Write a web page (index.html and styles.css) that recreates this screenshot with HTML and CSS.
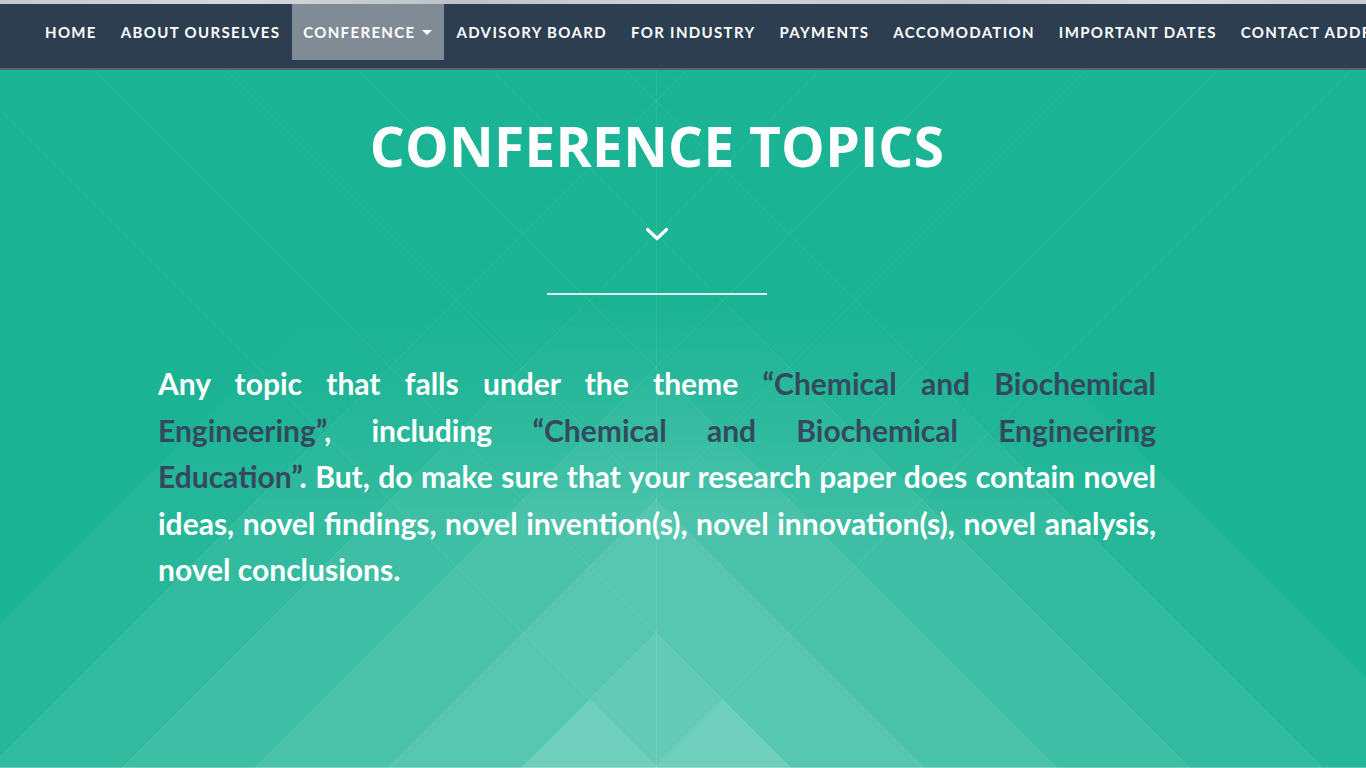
FILE: index.html
```html
<!DOCTYPE html>
<html lang="en">
<head>
<meta charset="utf-8">
<title>Conference Topics</title>
<link rel="stylesheet" href="styles.css">
</head>
<body>
<div class="topbar"></div>
<nav class="navbar">
  <ul class="nav-list">
    <li><a href="#">HOME</a></li>
    <li><a href="#">ABOUT OURSELVES</a></li>
    <li class="active"><a href="#">CONFERENCE <span class="caret"></span></a></li>
    <li><a href="#">ADVISORY BOARD</a></li>
    <li><a href="#">FOR INDUSTRY</a></li>
    <li><a href="#">PAYMENTS</a></li>
    <li><a href="#">ACCOMODATION</a></li>
    <li><a href="#">IMPORTANT DATES</a></li>
    <li><a href="#">CONTACT ADDRESS</a></li>
  </ul>
</nav>
<section class="topics">
  <div class="topics-inner">
    <h2 class="title">CONFERENCE TOPICS</h2>
    <svg class="chevron" width="24" height="16" viewBox="0 0 24 16" aria-hidden="true">
      <polyline points="2.5,3.5 12,12.5 21.5,3.5" fill="none" stroke="#ffffff" stroke-width="3.2" stroke-linecap="round" stroke-linejoin="round"/>
    </svg>
    <div class="rule"></div>
    <p class="lead">
      <span class="line">Any topic that falls under the theme <span class="hl">“Chemical and Biochemical</span></span>
      <span class="line"><span class="hl">Engineering”</span>, including <span class="hl">“Chemical and Biochemical Engineering</span></span>
      <span class="line"><span class="hl">Education”</span>. But, do make sure that your research paper does contain novel</span>
      <span class="line">ideas, novel findings, novel invention(s), novel innovation(s), novel analysis,</span>
      <span class="line last">novel conclusions.</span>
    </p>
  </div>
</section>
</body>
</html>
```

FILE: styles.css
```css
html, body {
  margin: 0;
  padding: 0;
}

body {
  width: 1366px;
  height: 768px;
  overflow: hidden;
  background: #1ab394;
  font-family: "Lato", "Open Sans", sans-serif;
}

.topbar {
  height: 4px;
  background: linear-gradient(90deg, #c4c9ce 0%, #d6d9dc 18%, #bcc2c8 33%, #d2d6d9 52%, #c0c6cb 70%, #d8dbde 86%, #c6cbd0 100%);
}

.navbar {
  height: 64px;
  background: #2c3e50;
  border-bottom: 2px solid #55626d;
  overflow: hidden;
}

.nav-list {
  display: flex;
  margin: 0;
  padding: 0 0 0 33px;
  list-style: none;
  white-space: nowrap;
}

.nav-list a {
  display: flex;
  align-items: center;
  height: 56px;
  padding: 0 12px;
  color: #ffffff;
  text-decoration: none;
  font-family: "Lato", sans-serif;
  font-weight: 700;
  font-size: 15px;
  letter-spacing: 1.34px;
}

.nav-list .active a {
  padding: 0 12px 0 11px;
  background: rgba(255, 255, 255, 0.4);
}

.caret {
  display: inline-block;
  width: 0;
  height: 0;
  margin-left: 7px;
  border-top: 5px solid #ffffff;
  border-left: 5px solid transparent;
  border-right: 5px solid transparent;
}

.topics {
  height: 698px;
  background-color: #1ab394;
  background-repeat: no-repeat;
  background-size: 1366px 698px;
  background-image: url("data:image/svg+xml;utf8,<svg xmlns='http://www.w3.org/2000/svg' width='1366' height='698' viewBox='0 0 1366 698'><defs><linearGradient id='g' x1='0' y1='0' x2='0' y2='698' gradientUnits='userSpaceOnUse'><stop offset='0.33' stop-color='white' stop-opacity='0'/><stop offset='0.645' stop-color='white' stop-opacity='1'/></linearGradient></defs><g fill='url(%23g)'><polygon fill-opacity='0.05' points='656,-102 1460,702 -148,702'/><polygon fill-opacity='0.055' points='656,31 1327,702 -15,702'/><polygon fill-opacity='0.06' points='656,164 1194,702 118,702'/><polygon fill-opacity='0.065' points='656,297 1061,702 251,702'/><polygon fill-opacity='0.07' points='656,430 928,702 384,702'/><polygon fill-opacity='0.08' points='656,563 795,702 517,702'/><polygon fill-opacity='0.08' points='590,630 662,702 518,702'/><polygon fill-opacity='0.08' points='723,630 795,702 651,702'/></g><g stroke='white' stroke-opacity='0.08' stroke-width='1' fill='none'><path d='M-344,-969 L1656,1031 M1656,-969 L-344,1031 M-344,-836 L1656,1164 M1656,-836 L-344,1164 M-344,-703 L1656,1297 M1656,-703 L-344,1297 M-344,-570 L1656,1430 M1656,-570 L-344,1430 M-344,-437 L1656,1563 M1656,-437 L-344,1563 M-344,-304 L1656,1696 M1656,-304 L-344,1696 M656.5,0 L656.5,698'/></g><rect x='0' y='697' width='1366' height='1' fill='white' fill-opacity='0.3'/></svg>");
}

.topics-inner {
  width: 1314px;
  padding-top: 46px;
  display: flex;
  flex-direction: column;
  align-items: center;
}

.title {
  margin: 0;
  font-family: "Open Sans", sans-serif;
  font-weight: 700;
  font-size: 55px;
  line-height: 60px;
  letter-spacing: 0.25px;
  color: #ffffff;
}

.chevron {
  display: block;
  margin-top: 50px;
}

.rule {
  width: 220px;
  height: 2px;
  margin-top: 51px;
  background: #e2eeea;
}

.lead {
  width: 998px;
  margin: 65px 0 0;
  font-family: "Lato", sans-serif;
  font-weight: 700;
  font-size: 30px;
  line-height: 46.5px;
  color: #ffffff;
}

.line {
  display: block;
  text-align: justify;
  text-align-last: justify;
}

.line.last {
  text-align-last: left;
}

.hl {
  color: #34495e;
}
```
